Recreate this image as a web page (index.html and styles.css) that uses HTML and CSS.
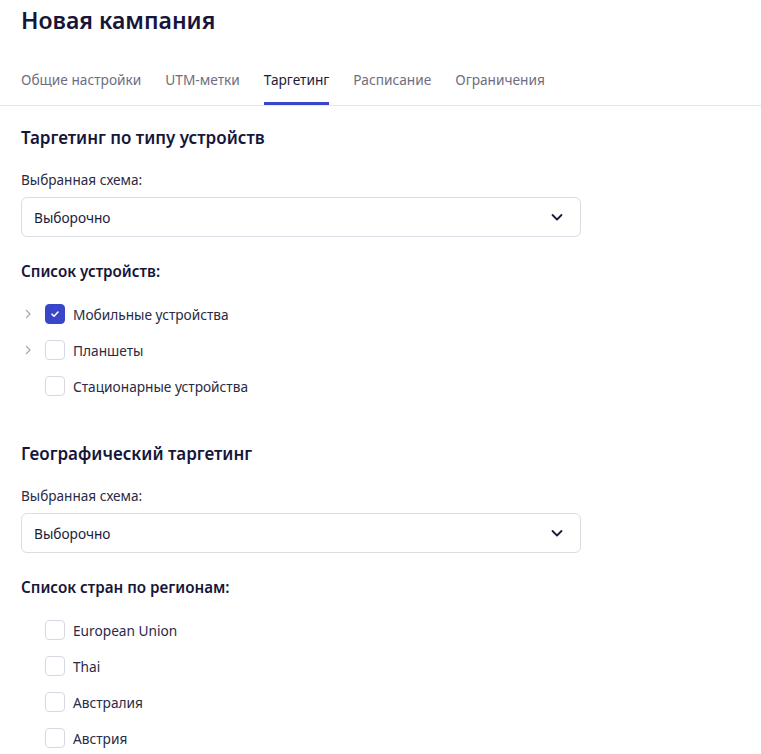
FILE: index.html
```html
<!DOCTYPE html>
<html>
<head>
  <title>Новая кампания</title>
  <link rel="stylesheet" href="styles.css">
</head>
<body>
  <div class="page">
    <h1 class="page-title">Новая кампания</h1>
    <div class="tabs">
      <span class="tab">Общие настройки</span>
      <span class="tab">UTM-метки</span>
      <span class="tab active">Таргетинг</span>
      <span class="tab">Расписание</span>
      <span class="tab">Ограничения</span>
    </div>

    <div class="section">
      <h2 class="section-title">Таргетинг по типу устройств</h2>
      <div class="field-label">Выбранная схема:</div>
      <div class="select">
        <span>Выборочно</span>
        <svg class="select-arrow" width="14" height="14" viewBox="0 0 14 14"><path d="M2.5 5l4.5 4.5 4.5-4.5" fill="none" stroke="#1b1b3d" stroke-width="1.8" stroke-linecap="round" stroke-linejoin="round"/></svg>
      </div>
      <h3 class="list-title">Список устройств:</h3>
      <div class="tree">
        <div class="tree-row">
          <span class="expander"><svg width="10" height="10" viewBox="0 0 10 10"><path d="M3.5 1.5l3.5 3.5-3.5 3.5" fill="none" stroke="#a6a6b4" stroke-width="1.2" stroke-linecap="round" stroke-linejoin="round"/></svg></span>
          <span class="checkbox checked"><svg width="12" height="12" viewBox="0 0 12 12"><path d="M3 6.2l2 2 4-4.2" fill="none" stroke="#fff" stroke-width="1.6" stroke-linecap="round" stroke-linejoin="round"/></svg></span>
          <span class="tree-text">Мобильные устройства</span>
        </div>
        <div class="tree-row">
          <span class="expander"><svg width="10" height="10" viewBox="0 0 10 10"><path d="M3.5 1.5l3.5 3.5-3.5 3.5" fill="none" stroke="#a6a6b4" stroke-width="1.2" stroke-linecap="round" stroke-linejoin="round"/></svg></span>
          <span class="checkbox"></span>
          <span class="tree-text">Планшеты</span>
        </div>
        <div class="tree-row">
          <span class="expander"></span>
          <span class="checkbox"></span>
          <span class="tree-text">Стационарные устройства</span>
        </div>
      </div>
    </div>

    <div class="section">
      <h2 class="section-title">Географический таргетинг</h2>
      <div class="field-label">Выбранная схема:</div>
      <div class="select">
        <span>Выборочно</span>
        <svg class="select-arrow" width="14" height="14" viewBox="0 0 14 14"><path d="M2.5 5l4.5 4.5 4.5-4.5" fill="none" stroke="#1b1b3d" stroke-width="1.8" stroke-linecap="round" stroke-linejoin="round"/></svg>
      </div>
      <h3 class="list-title">Список стран по регионам:</h3>
      <div class="tree">
        <div class="tree-row">
          <span class="expander"></span>
          <span class="checkbox"></span>
          <span class="tree-text">European Union</span>
        </div>
        <div class="tree-row">
          <span class="expander"></span>
          <span class="checkbox"></span>
          <span class="tree-text">Thai</span>
        </div>
        <div class="tree-row">
          <span class="expander"></span>
          <span class="checkbox"></span>
          <span class="tree-text">Австралия</span>
        </div>
        <div class="tree-row">
          <span class="expander"></span>
          <span class="checkbox"></span>
          <span class="tree-text">Австрия</span>
        </div>
      </div>
    </div>
  </div>
</body>
</html>
```

FILE: styles.css
```css
body {
  margin: 0;
  padding: 0;
  background: #fff;
  font-family: 'Noto Sans', 'Open Sans', sans-serif;
  color: #1b1b3d;
  overflow: hidden;
}

.page-title {
  margin: 0;
  padding: 3px 21px 0;
  height: 38px;
  font-size: 23px;
  font-weight: 600;
  line-height: 34px;
  color: #16163a;
}

.tabs {
  display: flex;
  gap: 24px;
  padding: 29px 21px 0;
  border-bottom: 1px solid #e6e6ec;
}

.tab {
  font-size: 13.7px;
  line-height: 20px;
  color: #6e6e80;
  padding-bottom: 12px;
  border-bottom: 3px solid transparent;
}

.tab.active {
  color: #1b1b3d;
  border-bottom-color: #3a46c9;
}

.section {
  padding: 0 21px;
}

.section-title {
  margin: 0;
  padding-top: 21px;
  font-size: 17px;
  font-weight: 600;
  line-height: 22px;
  color: #16163a;
}

.field-label {
  margin-top: 22px;
  font-size: 13.6px;
  line-height: 18px;
  color: #2a2a45;
}

.select {
  margin-top: 8px;
  width: 560px;
  height: 40px;
  box-sizing: border-box;
  border: 1px solid #dcdce4;
  border-radius: 6px;
  display: flex;
  align-items: center;
  justify-content: space-between;
  padding: 0 16px 0 12px;
  font-size: 13.7px;
  color: #1b1b3d;
}

.select-arrow {
  display: block;
}

.list-title {
  margin: 0;
  padding-top: 23px;
  font-size: 15.2px;
  font-weight: 600;
  line-height: 22px;
  color: #16163a;
}

.tree {
  padding-top: 14px;
  padding-bottom: 18px;
}

.tree-row {
  display: flex;
  align-items: center;
  height: 36px;
}

.expander {
  width: 24px;
  display: flex;
  align-items: center;
  justify-content: flex-start;
  padding-left: 2px;
  box-sizing: border-box;
}

.checkbox {
  width: 20px;
  height: 20px;
  box-sizing: border-box;
  border: 1px solid #d8d8e2;
  border-radius: 4px;
  display: flex;
  align-items: center;
  justify-content: center;
  background: #fff;
}

.checkbox.checked {
  background: #3a46c9;
  border-color: #3a46c9;
}

.tree-text {
  margin-left: 8px;
  font-size: 13.7px;
  color: #2a2a45;
}
```
